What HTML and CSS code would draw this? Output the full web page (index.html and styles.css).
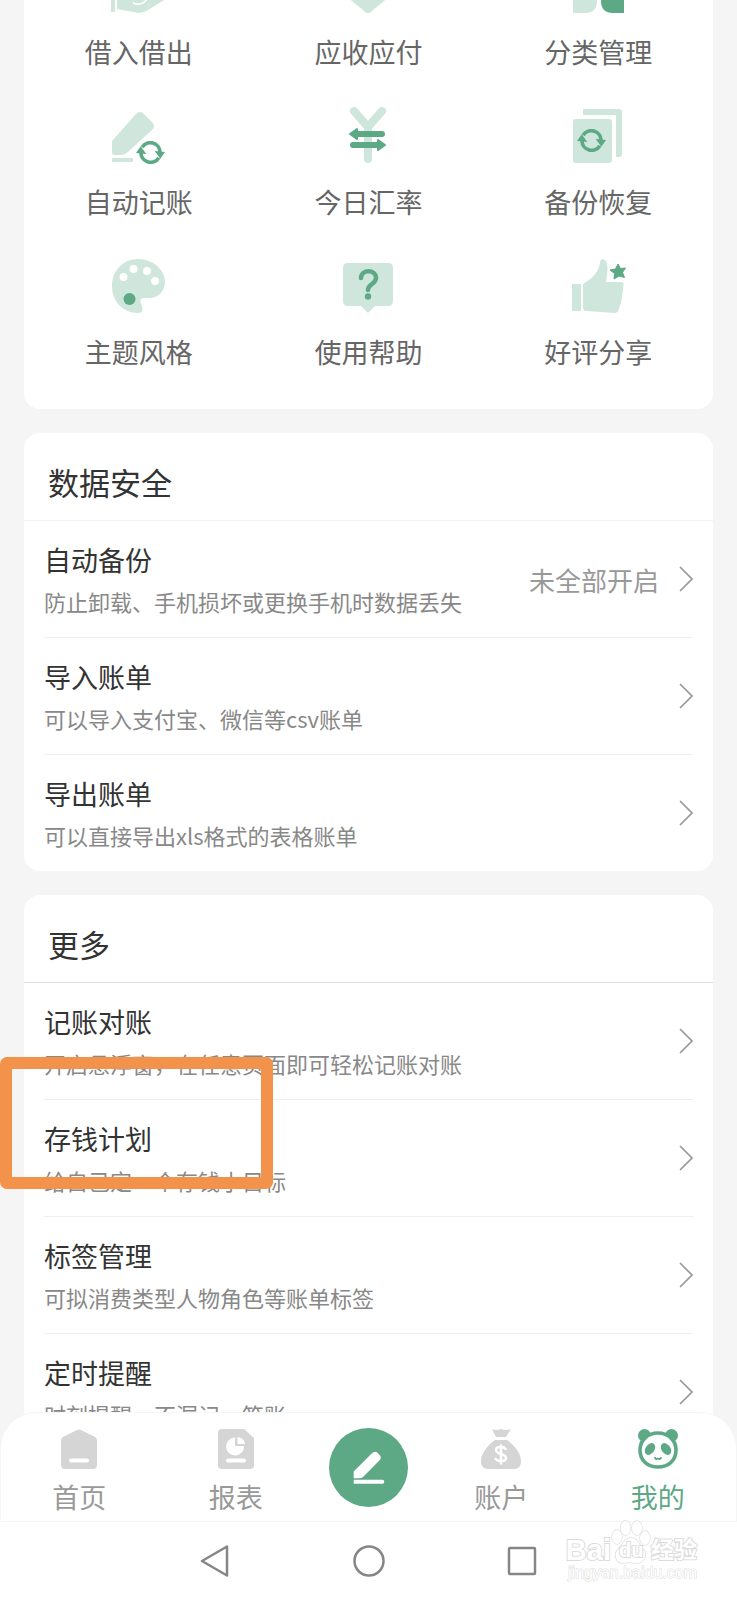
FILE: index.html
```html
<!DOCTYPE html>
<html lang="zh-CN">
<head>
<meta charset="utf-8">
<meta name="viewport" content="width=device-width, initial-scale=1">
<title>我的</title>
<link rel="stylesheet" href="styles.css">
</head>
<body>
<svg class="defs" aria-hidden="true">
  <symbol id="sync" viewBox="0 0 28 22">
    <g fill="none" stroke="#5da986" stroke-width="3.6">
      <path d="M6 6A9.300 9.300 0 0 1 23.200 10.500"/>
      <path d="M22 16A9.300 9.300 0 0 1 4.800 11.500"/>
    </g>
    <path fill="#5da986" d="M18 9.500 28 10.500 23.500 17ZM10 12.500 0 11.500 4.500 5Z"/>
  </symbol>
  <symbol id="chevron" viewBox="0 0 14 26">
    <path d="M1 1 13 13 1 25" fill="none" stroke="#999" stroke-width="1.700"/>
  </symbol>
</svg>
<div class="screen">
  <main class="content">
    <nav class="card tools" aria-label="工具">
      <a class="tool" href="#">
        <svg class="tool-icon" viewBox="0 0 56 56"><path fill="#cfe6dc" d="M0 30h4v25H0zM6 28h49v14L37 53q-4 3-9 3L6 52z"/><path d="M22 46q10 4 15-6" fill="none" stroke="#fff" stroke-width="1.500"/></svg>
        <span>借入借出</span></a>
      <a class="tool" href="#">
        <svg class="tool-icon" viewBox="0 0 56 56"><path fill="#cfe6dc" d="M6 4h44v35L30 55.500q-2 1-4 0L6 39z"/></svg>
        <span>应收应付</span></a>
      <a class="tool" href="#">
        <svg class="tool-icon" viewBox="0 0 56 56"><path fill="#cfe6dc" d="M3 30h24v14q0 12-12 12H3z"/><path fill="#5da986" d="M31 30h23v26H43q-12 0-12-12z"/></svg>
        <span>分类管理</span></a>
      <a class="tool" href="#">
        <svg class="tool-icon" viewBox="0 0 56 56"><path fill="#cfe6dc" d="M1 34 25 7q4-4 8 0l8 8q4 4 0 8L18 44q-4 4-8 4H3q-2 0-2-2z"/><rect x="1" y="51" width="21" height="4" rx="1" fill="#cfe6dc"/><use href="#sync" x="25" y="34" width="29" height="23"/></svg>
        <span>自动记账</span></a>
      <a class="tool" href="#">
        <svg class="tool-icon" viewBox="0 0 56 56"><path d="M14 4 28 20 42 4M28 20v32" fill="none" stroke="#cfe6dc" stroke-width="8" stroke-linecap="round" stroke-linejoin="round"/><g fill="none" stroke="#5da986" stroke-width="6" stroke-linecap="round"><path d="M16 27h26M13 38h26"/></g><path fill="#5da986" stroke="#5da986" stroke-width="2" stroke-linejoin="round" d="M17 22v10l-7-5zM38 33v10l7-5z"/></svg>
        <span>今日汇率</span></a>
      <a class="tool" href="#">
        <svg class="tool-icon" viewBox="0 0 56 56"><path fill="#cfe6dc" d="M13 2h36q3 0 3 3v42q0 3-3 3h-3V8H13z"/><rect x="3" y="12" width="39" height="44" rx="3" fill="#cfe6dc"/><use href="#sync" x="7" y="22" width="29" height="23"/></svg>
        <span>备份恢复</span></a>
      <a class="tool" href="#">
        <svg class="tool-icon" viewBox="0 0 56 56"><path fill="#cfe6dc" d="M27 2C42 2 54 13 54 25c0 9-7 16-15 16h-6c-4 0-4 3-3 6 2 4 3 9-3 9C12 56 1 44 1 29S12 2 27 2z"/><g fill="#fff"><circle cx="12.500" cy="20" r="4"/><circle cx="22.500" cy="12" r="4"/><circle cx="36" cy="14" r="4"/><circle cx="44" cy="24" r="4"/></g><circle cx="18.500" cy="42" r="6" fill="#5da986"/></svg>
        <span>主题风格</span></a>
      <a class="tool" href="#">
        <svg class="tool-icon" viewBox="0 0 56 56"><path fill="#cfe6dc" d="M8 6h40q5 0 5 5v33q0 5-5 5H35l-6 6q-1 1-2 0l-6-6H8q-5 0-5-5V11q0-5 5-5z"/><path d="M21 21c0-9 15-9 15 0 0 6-8 6-8 12" fill="none" stroke="#5da986" stroke-width="4.500" stroke-linecap="round"/><circle cx="28" cy="39.500" r="3.200" fill="#5da986"/></svg>
        <span>使用帮助</span></a>
      <a class="tool" href="#">
        <svg class="tool-icon" viewBox="0 0 56 56"><path fill="#cfe6dc" d="M2 27h9v27H2zM13 27c8-5 16-11 17-22 0-4 6-4 7 2 1 5 0 11-1 18h15q3 0 2.500 3c-1 9-2 18-5 25q-1 3-4 3L16 54q-3 0-3-3z"/><path fill="#5da986" stroke="#5da986" stroke-linejoin="round" d="m48 7 2.500 4.500 5-.5-3 4.500 2 5-5.500-1.500-5 3 .5-5.500-4.500-3.500 5.500-1z"/></svg>
        <span>好评分享</span></a>
    </nav>

    <section class="card">
      <h2 class="card-title">数据安全</h2>
      <ul class="rows">
        <li><a class="row" href="#"><span class="row-text"><span class="row-name">自动备份</span><span class="row-note">防止卸载、手机损坏或更换手机时数据丢失</span></span><span class="row-state">未全部开启</span><svg class="chevron"><use href="#chevron"/></svg></a></li>
        <li><a class="row" href="#"><span class="row-text"><span class="row-name">导入账单</span><span class="row-note">可以导入支付宝、微信等csv账单</span></span><svg class="chevron"><use href="#chevron"/></svg></a></li>
        <li><a class="row" href="#"><span class="row-text"><span class="row-name">导出账单</span><span class="row-note">可以直接导出xls格式的表格账单</span></span><svg class="chevron"><use href="#chevron"/></svg></a></li>
      </ul>
    </section>

    <section class="card">
      <h2 class="card-title strong">更多</h2>
      <ul class="rows">
        <li><a class="row" href="#"><span class="row-text"><span class="row-name">记账对账</span><span class="row-note">开启悬浮窗，在任意页面即可轻松记账对账</span></span><svg class="chevron"><use href="#chevron"/></svg></a></li>
        <li><a class="row" href="#"><span class="row-text"><span class="row-name">存钱计划</span><span class="row-note">给自己定一个存钱小目标</span></span><svg class="chevron"><use href="#chevron"/></svg></a><span class="marker"></span></li>
        <li><a class="row" href="#"><span class="row-text"><span class="row-name">标签管理</span><span class="row-note">可拟消费类型人物角色等账单标签</span></span><svg class="chevron"><use href="#chevron"/></svg></a></li>
        <li><a class="row" href="#"><span class="row-text"><span class="row-name">定时提醒</span><span class="row-note">时刻提醒，不漏记一笔账</span></span><svg class="chevron"><use href="#chevron"/></svg></a></li>
      </ul>
    </section>
  </main>

  <nav class="tabs" aria-label="主导航">
    <a class="tab" href="#"><svg class="tab-icon" viewBox="0 0 40 40"><path fill="#d5d5d5" d="M18 1q2-1 4 0l14 7q2 1 2 4v24q0 4-4 4H6q-4 0-4-4V12q0-3 2-4z"/><rect x="10" y="29.500" width="20" height="4" rx="2" fill="#fff"/></svg><span>首页</span></a>
    <a class="tab" href="#"><svg class="tab-icon" viewBox="0 0 40 40"><path fill="#d5d5d5" d="M6 0h22l10 9v27q0 4-4 4H6q-4 0-4-4V4q0-4 4-4z"/><path fill="#fff" d="M19 8.500V17h9a9 9 0 1 1-9-8.500zM21.500 8q7 1 7.500 7h-7.500z"/><rect x="10" y="29.500" width="20" height="4" rx="2" fill="#fff"/></svg><span>报表</span></a>
    <button class="add" type="button" aria-label="记一笔"><svg class="add-icon" viewBox="0 0 80 80"><path fill="#fff" d="M25 44 43 26q4-4 7 0l1 1q3 3 0 6L35 49q-2 2-5 2h-5zM25 52.500h29q2 0 2 2t-2 2H25z"/></svg></button>
    <a class="tab" href="#"><svg class="tab-icon" viewBox="0 0 40 40"><path fill="#d5d5d5" d="M11 0q4 2 9 0 5 2 10 0l-5 8H15zM14 11h12c7 5 14 13 14 21 0 6-3 8-8 8H8c-5 0-8-2-8-8 0-8 7-16 14-21z"/><path d="M25 21c-1-4-10-4-10 0 0 5 10 3 10 8 0 4-9 4-11 0M20 15.500v20" fill="none" stroke="#fff" stroke-width="2.500"/></svg><span>账户</span></a>
    <a class="tab active" href="#"><svg class="tab-icon" viewBox="0 0 40 40"><g fill="#5da986"><circle cx="6.500" cy="6.500" r="6.500"/><circle cx="33.500" cy="6.500" r="6.500"/></g><path fill="#fff" stroke="#5da986" stroke-width="3.600" d="M20 4c11 0 18 8 18 17 0 11-8 17-18 17S2 32 2 21C2 12 9 4 20 4z"/><g fill="#5da986"><ellipse cx="12" cy="20" rx="4.500" ry="6.500" transform="rotate(35 12 20)"/><ellipse cx="28" cy="20" rx="4.500" ry="6.500" transform="rotate(-35 28 20)"/></g><path d="M17 28q0 3 3 1.500 3 1.500 3-1.500" fill="none" stroke="#5da986" stroke-width="1.800"/></svg><span>我的</span></a>
  </nav>

  <footer class="system">
    <button class="key" type="button" aria-label="返回"><svg viewBox="0 0 32 32"><path d="M27 1.500v29L2 16z" fill="none" stroke="#868686" stroke-width="2.500" stroke-linejoin="round"/></svg></button>
    <button class="key" type="button" aria-label="主屏幕"><svg viewBox="0 0 32 32"><circle cx="16" cy="16" r="14.500" fill="none" stroke="#868686" stroke-width="2.500"/></svg></button>
    <button class="key" type="button" aria-label="最近任务"><svg viewBox="0 0 32 32"><rect x="3" y="3" width="26" height="26" rx="1" fill="none" stroke="#868686" stroke-width="2.500"/></svg></button>
    <div class="watermark">
      <div class="brand"><span>Bai</span><span class="paw"><svg viewBox="0 0 40 44"><g fill="#fff" stroke="#dcdcdc" stroke-width="1.300"><ellipse cx="6" cy="17" rx="5" ry="7"/><ellipse cx="14.500" cy="8" rx="5" ry="7"/><ellipse cx="26" cy="8" rx="5" ry="7"/><ellipse cx="34" cy="18" rx="5" ry="7"/><path d="M20 18c7 0 8 7 12 11 5 6 1 14-6 14-3 0-9-1-12 0-9 1-12-8-7-14 5-4 6-11 13-11z"/></g></svg><span class="du">du</span></span><span class="brand-cn">经验</span></div>
      <div class="site">jingyan.baidu.com</div>
    </div>
  </footer>
</div>
</body>
</html>
```
FILE: styles.css
```css
* { box-sizing: border-box; }
body {
  margin: 0;
  background: #fff;
  color: #333;
  font-family: "Noto Sans CJK SC", "Noto Sans", sans-serif;
  font-size: 27px;
  font-weight: 400;
}
a { color: inherit; text-decoration: none; }
button { padding: 0; border: 0; background: none; }
svg { display: block; }
.defs { position: absolute; width: 0; height: 0; }

.screen { display: flex; flex-direction: column; height: 100vh; overflow: hidden; }
.content {
  flex: 1;
  min-height: 0;
  overflow: hidden;
  display: flex;
  flex-direction: column;
  gap: 24px;
  padding: 0 24px;
  background: #f5f5f5;
}
.card { flex: none; border-radius: 16px; background: #fff; }

/* The list is scrolled past the top of the first card. */
.tools {
  display: grid;
  grid-template-columns: repeat(3, 1fr);
  row-gap: 37px;
  margin-top: -67px;
  padding: 24px 0 39px;
  color: #666;
}
.tool { display: flex; flex-direction: column; align-items: center; gap: 21px; line-height: 36px; }
.tool-icon { width: 56px; height: 56px; overflow: visible; }

.card-title {
  margin: 0;
  padding: 29px 24px 18px;
  border-bottom: 1px solid #f3f3f3;
  font-size: 31px;
  font-weight: inherit;
  line-height: 40px;
}
.card-title.strong { border-color: #dedede; }
.rows { margin: 0; padding: 0 20px; list-style: none; }
.row { display: flex; align-items: center; height: 116px; }
.rows li { position: relative; }
.rows li + li { border-top: 1px solid #eee; }
.row-text { flex: 1; display: flex; flex-direction: column; gap: 6px; }
.row-name { line-height: 38px; }
.row-note { color: #888; font-size: 22px; line-height: 32px; }
.row-state { margin-right: 20px; color: #999; font-size: 26px; }
.chevron { width: 14px; height: 26px; }
.marker {
  position: absolute;
  top: -43px;
  left: -44px;
  width: 273px;
  height: 132px;
  border: 12px solid #f2924b;
  border-radius: 7px;
  pointer-events: none;
}

.tabs {
  position: relative;
  display: flex;
  align-items: flex-start;
  margin-top: -36px;
  height: 110px;
  padding-top: 15px;
  border: 1px solid #f5f5f5;
  border-radius: 36px 36px 0 0;
  background: #fff;
  color: #999;
}
.tab { flex: 157; display: flex; flex-direction: column; align-items: center; gap: 9px; padding-top: 1px; line-height: 38px; }
.tab-icon { width: 40px; height: 40px; }
.tab.active { color: #5da986; }
.add { flex: 109; display: flex; justify-content: center; }
.add-icon { width: 79px; height: 79px; border-radius: 50%; background: #5da986; }

.system { position: relative; display: flex; justify-content: center; align-items: center; gap: 121px; height: 78px; background: #fff; }
.key { width: 32px; height: 32px; }
.watermark {
  position: absolute;
  right: 40px;
  bottom: 18px;
  color: #fff;
  font-family: "Liberation Sans", "Noto Sans CJK SC", sans-serif;
  text-align: right;
  paint-order: stroke;
}
.brand { display: flex; align-items: flex-end; justify-content: flex-end; font-size: 29px; font-weight: 700; line-height: 28px; -webkit-text-stroke: 2px #dcdcdc; }
.paw { position: relative; }
.paw svg { width: 40px; height: 44px; }
.du { position: absolute; left: 8px; bottom: 0; font-size: 20px; }
.brand-cn { font-size: 23px; }
.site { font-size: 16px; line-height: 18px; -webkit-text-stroke: 1px #dcdcdc; }
```
